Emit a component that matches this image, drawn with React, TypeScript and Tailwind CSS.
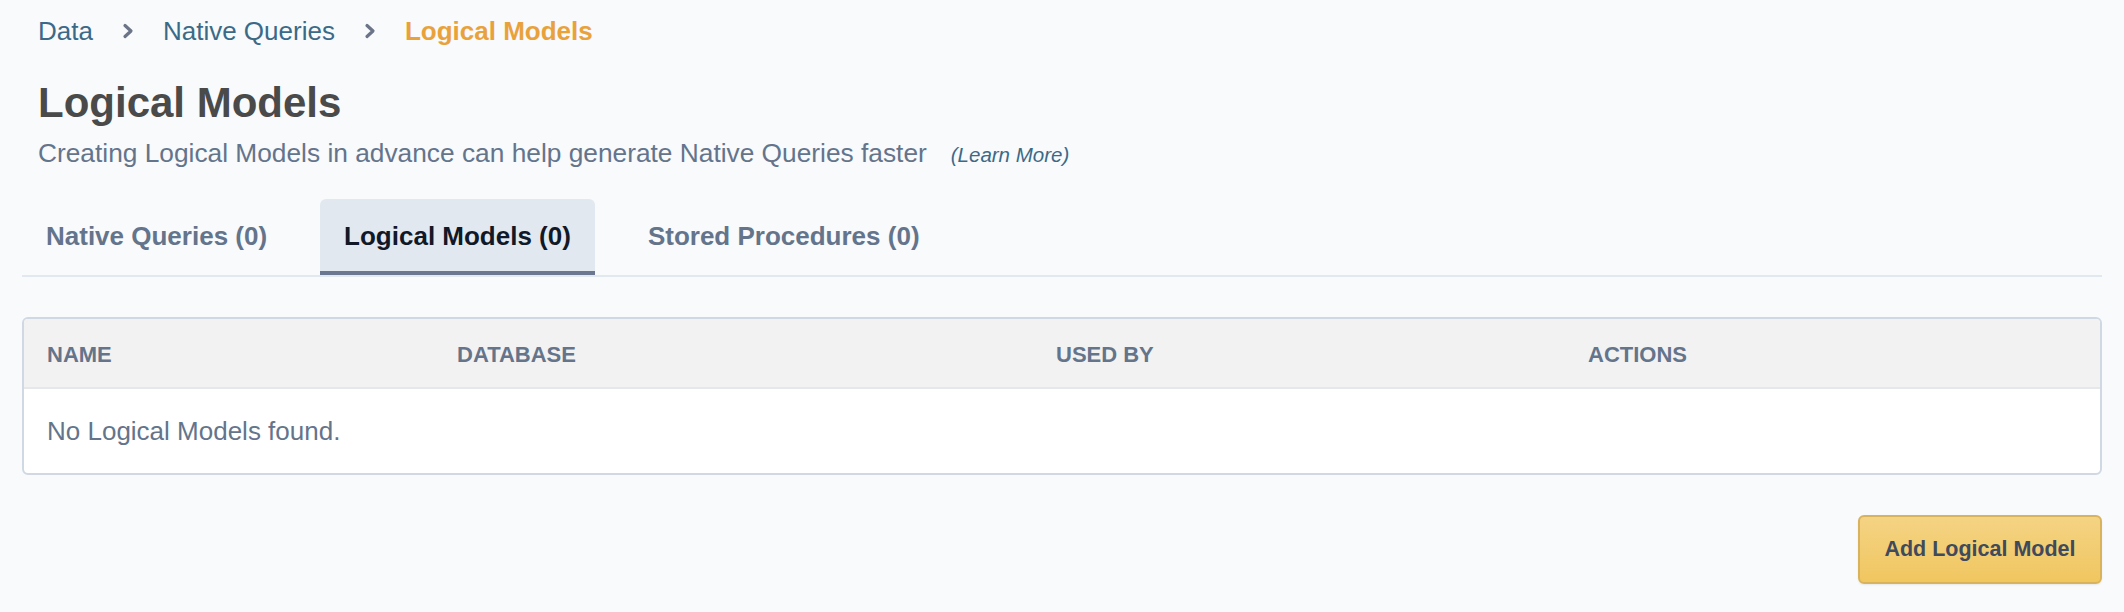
import React from "react";

function Chevron() {
  return (
    <svg width="12" height="16" viewBox="0 0 12 16" className="mx-[29px]" aria-hidden>
      <path d="M3 2.5 L9 8 L3 13.5" fill="none" stroke="#6b7488" strokeWidth="3.2" strokeLinecap="round" strokeLinejoin="round" />
    </svg>
  );
}

export default function App() {
  return (
    <div className="min-h-screen bg-[#f8fafc] px-[22px] font-['Liberation_Sans',Arial,sans-serif]">
      {/* Breadcrumb */}
      <div className="flex h-[60px] items-center pl-4 pt-[2px] text-[26px] leading-none">
        <span className="text-[#3b6a88]">Data</span>
        <Chevron />
        <span className="text-[#3b6a88]">Native Queries</span>
        <Chevron />
        <span className="font-bold text-[#e9a23b]">Logical Models</span>
      </div>

      {/* Title */}
      <h1 className="mt-[19px] pl-4 text-[42px] font-bold leading-[48px] text-[#4a4a4a]">Logical Models</h1>
      <div className="mt-[9px] flex items-baseline pl-4 leading-[34px]">
        <span className="text-[26.3px] text-[#64748b]">
          Creating Logical Models in advance can help generate Native Queries faster
        </span>
        <span className="ml-[24px] text-[20.5px] italic text-[#3b6a88]">(Learn More)</span>
      </div>

      {/* Tabs */}
      <div className="mt-[27px] flex gap-[29px] border-b-2 border-[#e2e8f0]">
        <div className="flex h-[76px] items-center border-b-4 border-transparent px-6 pt-[2px] text-[26px] font-bold text-[#64748b]">
          Native Queries (0)
        </div>
        <div className="flex h-[76px] items-center rounded-t-[6px] border-b-4 border-[#6b7790] bg-[#e2e8f0] px-6 pt-[2px] text-[26px] font-bold text-[#111827]">
          Logical Models (0)
        </div>
        <div className="flex h-[76px] items-center border-b-4 border-transparent px-6 pt-[2px] text-[26px] font-bold text-[#64748b]">
          Stored Procedures (0)
        </div>
      </div>

      {/* Table */}
      <div className="mt-[40px] overflow-hidden rounded-[6px] border-2 border-[#cfd8e3] bg-white">
        <div className="grid h-[70px] grid-cols-[433px_599px_532px_1fr] items-center border-b-2 border-[#e5e7eb] bg-[#f2f2f2] pt-[2px] text-[22px] font-bold uppercase text-[#64748b]">
          <div className="pl-[23px]">Name</div>
          <div>Database</div>
          <div>Used By</div>
          <div>Actions</div>
        </div>
        <div className="flex h-[84px] items-center pl-[23px] text-[26px] text-[#64748b]">No Logical Models found.</div>
      </div>

      {/* Button */}
      <div className="mt-[40px] flex justify-end">
        <button className="h-[69px] w-[244px] rounded-[6px] border-2 border-[#d9b25e] bg-gradient-to-b from-[#f4d383] to-[#f0c65f] text-[21.5px] font-bold text-[#3f4a5c] shadow-[0_1px_2px_rgba(0,0,0,0.08)]">
          Add Logical Model
        </button>
      </div>
    </div>
  );
}
